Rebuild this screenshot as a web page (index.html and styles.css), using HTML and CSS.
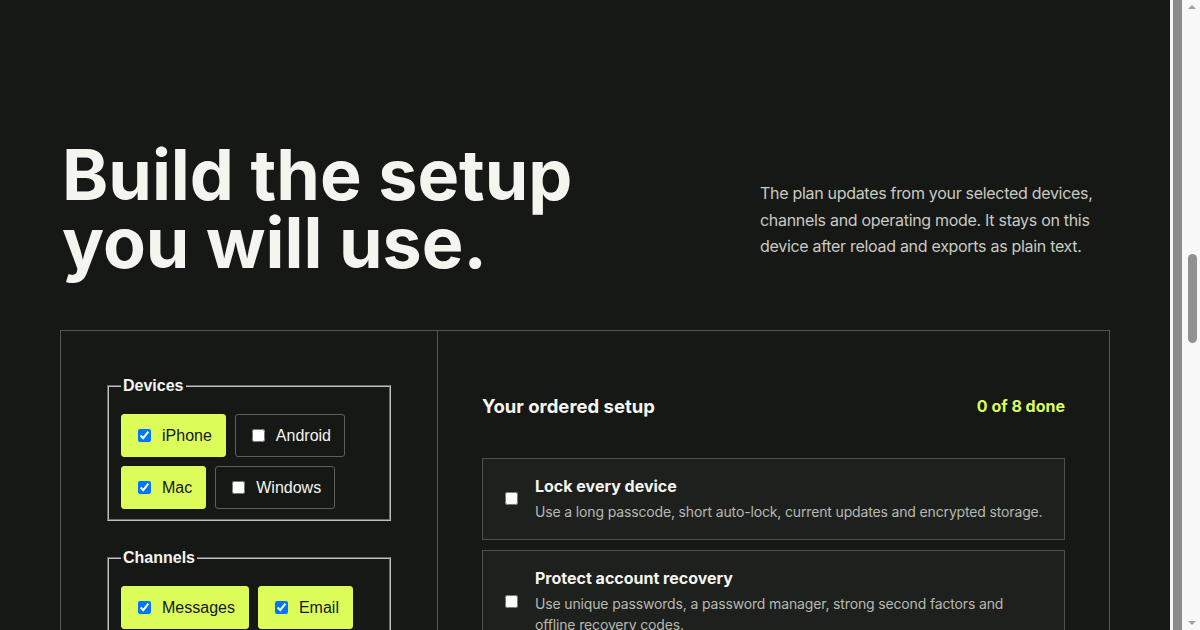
FILE: index.html
```html
<!DOCTYPE html>
<html lang="en">
<head>
  <meta charset="UTF-8">
  <meta name="viewport" content="width=device-width, initial-scale=1.0">
  <title>Build the setup</title>
  <link rel="stylesheet" href="styles.css">
</head>
<body>
  <div class="page">
    <div class="rail"></div>
    <div class="scrollbar">
      <span class="arrow up"></span>
      <span class="thumb"></span>
      <span class="arrow down"></span>
    </div>

    <div class="wrap">
      <section class="hero">
        <h1>Build the setup<br>you will use.</h1>
        <p class="intro">The plan updates from your selected devices, channels and operating mode. It stays on this device after reload and exports as plain text.</p>
      </section>

      <section class="planner">
        <!-- Choices -->
        <div class="choices">
          <fieldset>
            <legend>Devices</legend>
            <div class="chips">
              <label class="chip on"><input type="checkbox" checked> iPhone</label>
              <label class="chip"><input type="checkbox"> Android</label>
              <label class="chip on"><input type="checkbox" checked> Mac</label>
              <label class="chip"><input type="checkbox"> Windows</label>
            </div>
          </fieldset>

          <fieldset>
            <legend>Channels</legend>
            <div class="chips">
              <label class="chip on"><input type="checkbox" checked> Messages</label>
              <label class="chip on"><input type="checkbox" checked> Email</label>
              <label class="chip"><input type="checkbox"> Social</label>
              <label class="chip"><input type="checkbox"> Banking</label>
            </div>
          </fieldset>

          <fieldset>
            <legend>Mode</legend>
            <div class="chips">
              <label class="chip on"><input type="radio" name="mode" checked> Everyday</label>
              <label class="chip"><input type="radio" name="mode"> Travel</label>
            </div>
          </fieldset>
        </div>

        <!-- Ordered list -->
        <div class="plan">
          <div class="plan-head">
            <h2>Your ordered setup</h2>
            <span class="count">0 of 8 done</span>
          </div>

          <ol class="steps">
            <li class="step">
              <input type="checkbox">
              <div>
                <h3>Lock every device</h3>
                <p>Use a long passcode, short auto-lock, current updates and encrypted storage.</p>
              </div>
            </li>
            <li class="step">
              <input type="checkbox">
              <div>
                <h3>Protect account recovery</h3>
                <p>Use unique passwords, a password manager, strong second factors and offline recovery codes.</p>
              </div>
            </li>
            <li class="step">
              <input type="checkbox">
              <div>
                <h3>Review app permissions</h3>
                <p>Remove location, contacts and microphone access from apps that do not need them.</p>
              </div>
            </li>
            <li class="step">
              <input type="checkbox">
              <div>
                <h3>Secure your messages</h3>
                <p>Turn on end-to-end encryption, disappearing messages and safety number checks.</p>
              </div>
            </li>
            <li class="step">
              <input type="checkbox">
              <div>
                <h3>Clean up email</h3>
                <p>Check forwarding rules, connected apps and recovery addresses.</p>
              </div>
            </li>
            <li class="step">
              <input type="checkbox">
              <div>
                <h3>Back up what matters</h3>
                <p>Keep an encrypted backup and test that you can restore it.</p>
              </div>
            </li>
            <li class="step">
              <input type="checkbox">
              <div>
                <h3>Harden your Mac</h3>
                <p>Enable FileVault, the firewall and automatic security responses.</p>
              </div>
            </li>
            <li class="step">
              <input type="checkbox">
              <div>
                <h3>Plan for loss</h3>
                <p>Turn on device finding and know how to erase a lost device remotely.</p>
              </div>
            </li>
          </ol>
        </div>
      </section>
    </div>
  </div>
</body>
</html>
```

FILE: styles.css
```css
html, body {
  height: 100%;
}

body {
  margin: 0;
  overflow: hidden;
  background: #161815;
  color: #f5f5f0;
  font-family: Inter, "Noto Sans", sans-serif;
}

.page {
  height: 100%;
  overflow-y: scroll;
}

/* right edge: rail and scrollbar */
.rail {
  position: fixed;
  top: 0;
  right: 18px;
  bottom: 0;
  width: 9px;
  background: #8a8a8a;
  border-left: 3px solid #f6f6f6;
}

.scrollbar {
  position: fixed;
  top: 0;
  right: 0;
  bottom: 0;
  width: 18px;
  background: #f8f8f8;
}

.thumb {
  position: absolute;
  top: 254px;
  left: 6px;
  width: 9px;
  height: 89px;
  border-radius: 5px;
  background: #919191;
}

.arrow {
  position: absolute;
  left: 6px;
  width: 0;
  height: 0;
  border-left: 4px solid transparent;
  border-right: 4px solid transparent;
}

.arrow.up {
  top: 5px;
  border-bottom: 4px solid #a0a0a0;
}

.arrow.down {
  bottom: 5px;
  border-top: 4px solid #a0a0a0;
}

.wrap {
  width: 1050px;
  margin-left: 60px;
  padding-bottom: 80px;
}

/* Hero */
.hero {
  display: flex;
  justify-content: space-between;
  align-items: flex-start;
  padding-top: 141px;
  margin-bottom: 53px;
}

h1 {
  margin: 0 0 0 2px;
  font-size: 70px;
  line-height: 68px;
  font-weight: 700;
}

.intro {
  width: 350px;
  margin: 39px 0 0;
  font-size: 16px;
  line-height: 26.5px;
  letter-spacing: -0.3px;
  color: #c9cac2;
}

/* Planner panel */
.planner {
  display: grid;
  grid-template-columns: 377px 1fr;
  border: 1px solid #555653;
}

.choices {
  border-right: 1px solid #555653;
  padding: 46px 44px;
  font-family: "Liberation Sans", Arial, sans-serif;
}

fieldset {
  margin: 0 2px 28px;
  padding: 19px 12px 10px;
  border: 2px groove #c0c0c0;
}

legend {
  padding: 0 2px;
  font-size: 16px;
  line-height: 18px;
  font-weight: 700;
}

.chips {
  display: flex;
  flex-wrap: wrap;
  gap: 9px;
}

.chip {
  display: inline-flex;
  align-items: center;
  gap: 11px;
  height: 43px;
  box-sizing: border-box;
  padding: 0 13px 0 16px;
  border: 1px solid #5e5f5c;
  border-radius: 3px;
  font-size: 16px;
  color: #f5f5f0;
}

.chip input {
  margin: 0;
}

.chip.on {
  background: #dcfc5a;
  border-color: #dcfc5a;
  color: #161815;
}

/* Ordered plan */
.plan {
  padding: 44px;
}

.plan-head {
  display: flex;
  justify-content: space-between;
  align-items: center;
  height: 62px;
  margin-bottom: 21px;
}

h2 {
  margin: 0;
  font-size: 18.5px;
  font-weight: 700;
}

.count {
  color: #dcfc5a;
  font-weight: 700;
  font-size: 16px;
}

.steps {
  list-style: none;
  margin: 0;
  padding: 0;
  display: flex;
  flex-direction: column;
  gap: 10px;
}

.step {
  display: flex;
  align-items: center;
  gap: 17px;
  padding: 16px 17px 17px 22px;
  background: #1d201d;
  border: 1px solid #4d504c;
}

.step input {
  margin: 0;
  flex: none;
}

.step h3 {
  margin: 0 0 4px;
  font-size: 16px;
  line-height: 22px;
  font-weight: 700;
}

.step p {
  margin: 0;
  font-size: 14px;
  line-height: 21px;
  letter-spacing: -0.15px;
  color: #b7b9b1;
}
```
